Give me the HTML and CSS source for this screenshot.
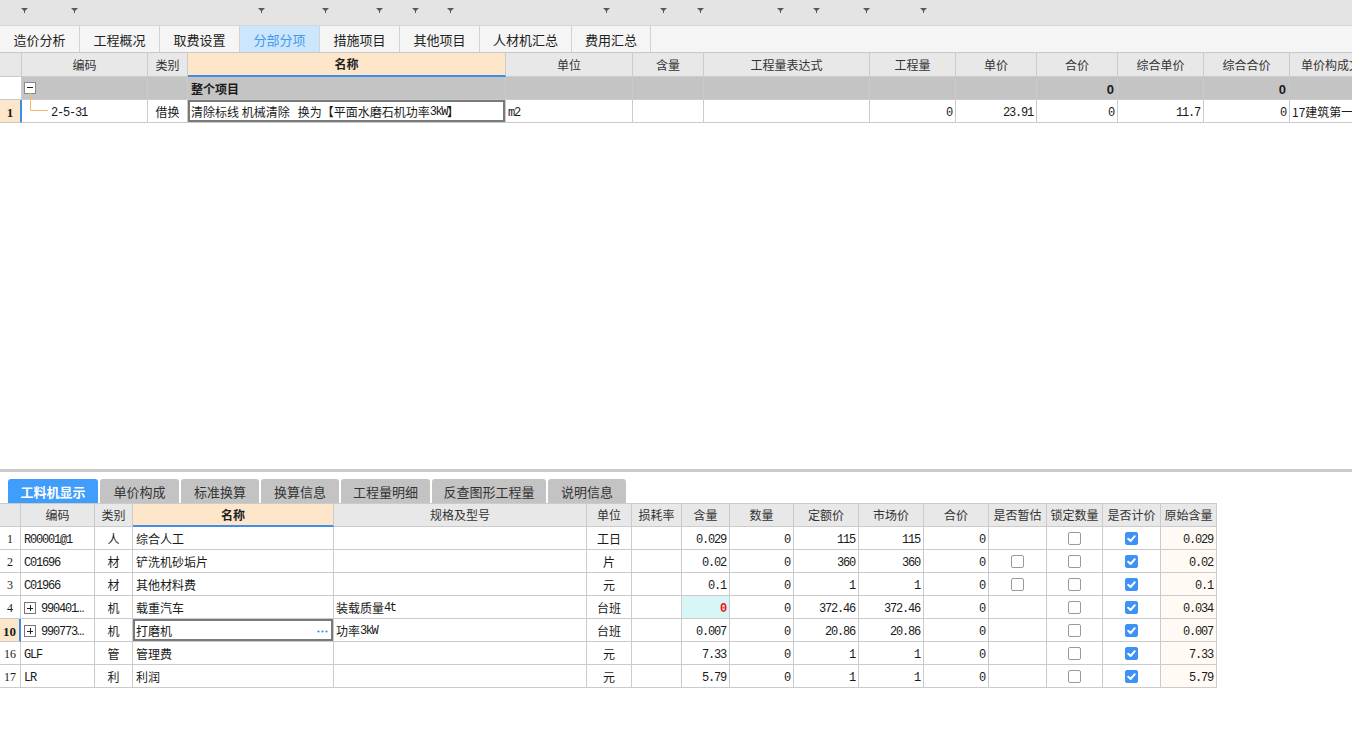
FILE: index.html
```html
<!DOCTYPE html>
<html lang="zh-CN">
<head>
<meta charset="utf-8">
<title>分部分项</title>
<link rel="stylesheet" href="styles.css">
</head>
<body>
<div class="toolbar">
  <div class="tb-item w28"><svg class="arrow" viewBox="0 0 7 5"><polygon points="0,0 7,0 3.5,3.5"/><rect x="3" y="3" width="1" height="2"/></svg></div>
  <div class="tb-item w50"><svg class="arrow" viewBox="0 0 7 5"><polygon points="0,0 7,0 3.5,3.5"/><rect x="3" y="3" width="1" height="2"/></svg></div>
  <div class="tb-item w187"><svg class="arrow" viewBox="0 0 7 5"><polygon points="0,0 7,0 3.5,3.5"/><rect x="3" y="3" width="1" height="2"/></svg></div>
  <div class="tb-item w64"><svg class="arrow" viewBox="0 0 7 5"><polygon points="0,0 7,0 3.5,3.5"/><rect x="3" y="3" width="1" height="2"/></svg></div>
  <div class="tb-item w54"><svg class="arrow" viewBox="0 0 7 5"><polygon points="0,0 7,0 3.5,3.5"/><rect x="3" y="3" width="1" height="2"/></svg></div>
  <div class="tb-item w36"><svg class="arrow" viewBox="0 0 7 5"><polygon points="0,0 7,0 3.5,3.5"/><rect x="3" y="3" width="1" height="2"/></svg></div>
  <div class="tb-item w35"><svg class="arrow" viewBox="0 0 7 5"><polygon points="0,0 7,0 3.5,3.5"/><rect x="3" y="3" width="1" height="2"/></svg></div>
  <div class="tb-item w156"><svg class="arrow" viewBox="0 0 7 5"><polygon points="0,0 7,0 3.5,3.5"/><rect x="3" y="3" width="1" height="2"/></svg></div>
  <div class="tb-item w57"><svg class="arrow" viewBox="0 0 7 5"><polygon points="0,0 7,0 3.5,3.5"/><rect x="3" y="3" width="1" height="2"/></svg></div>
  <div class="tb-item w37"><svg class="arrow" viewBox="0 0 7 5"><polygon points="0,0 7,0 3.5,3.5"/><rect x="3" y="3" width="1" height="2"/></svg></div>
  <div class="tb-item w80"><svg class="arrow" viewBox="0 0 7 5"><polygon points="0,0 7,0 3.5,3.5"/><rect x="3" y="3" width="1" height="2"/></svg></div>
  <div class="tb-item w36"><svg class="arrow" viewBox="0 0 7 5"><polygon points="0,0 7,0 3.5,3.5"/><rect x="3" y="3" width="1" height="2"/></svg></div>
  <div class="tb-item w50"><svg class="arrow" viewBox="0 0 7 5"><polygon points="0,0 7,0 3.5,3.5"/><rect x="3" y="3" width="1" height="2"/></svg></div>
  <div class="tb-item w57"><svg class="arrow" viewBox="0 0 7 5"><polygon points="0,0 7,0 3.5,3.5"/><rect x="3" y="3" width="1" height="2"/></svg></div>
</div>

<div class="tabs">
  <div class="tab">造价分析</div>
  <div class="tab">工程概况</div>
  <div class="tab">取费设置</div>
  <div class="tab active">分部分项</div>
  <div class="tab">措施项目</div>
  <div class="tab">其他项目</div>
  <div class="tab wide">人材机汇总</div>
  <div class="tab last">费用汇总</div>
</div>

<div class="upper">
  <div class="grid top-grid">
    <div class="row">
      <div class="c h"></div>
      <div class="c h">编码</div>
      <div class="c h">类别</div>
      <div class="c h name">名称</div>
      <div class="c h">单位</div>
      <div class="c h">含量</div>
      <div class="c h">工程量表达式</div>
      <div class="c h">工程量</div>
      <div class="c h">单价</div>
      <div class="c h">合价</div>
      <div class="c h">综合单价</div>
      <div class="c h">综合合价</div>
      <div class="c h">单价构成文件</div>
    </div>
    <div class="row group">
      <div class="c rn blank"></div>
      <div class="c code"><span class="minus"></span></div>
      <div class="c"></div>
      <div class="c bold">整个项目</div>
      <div class="c"></div>
      <div class="c"></div>
      <div class="c"></div>
      <div class="c"></div>
      <div class="c"></div>
      <div class="c r num bold">0</div>
      <div class="c"></div>
      <div class="c r num bold">0</div>
      <div class="c"></div>
    </div>
    <div class="row">
      <div class="c rn cur">1</div>
      <div class="c code tree num">2-5-31</div>
      <div class="c ctr">借换</div>
      <div class="c sel">清除标线&nbsp;机械清除&nbsp;&nbsp;&nbsp;换为【平面水磨石机功率<span class="num">3kW</span>】</div>
      <div class="c unit num">m2</div>
      <div class="c"></div>
      <div class="c"></div>
      <div class="c r num">0</div>
      <div class="c r num">23.91</div>
      <div class="c r num">0</div>
      <div class="c r num">11.7</div>
      <div class="c r num">0</div>
      <div class="c file">17建筑第一册</div>
    </div>
  </div>
</div>

<div class="splitter"></div>

<div class="lower">
  <div class="subtabs">
    <div class="stab active t1">工料机显示</div>
    <div class="stab t2">单价构成</div>
    <div class="stab t3">标准换算</div>
    <div class="stab t3">换算信息</div>
    <div class="stab t4">工程量明细</div>
    <div class="stab t5">反查图形工程量</div>
    <div class="stab t3">说明信息</div>
  </div>

  <div class="grid bot-grid">
    <div class="row">
      <div class="c h"></div>
      <div class="c h">编码</div>
      <div class="c h">类别</div>
      <div class="c h name">名称</div>
      <div class="c h">规格及型号</div>
      <div class="c h">单位</div>
      <div class="c h">损耗率</div>
      <div class="c h">含量</div>
      <div class="c h">数量</div>
      <div class="c h">定额价</div>
      <div class="c h">市场价</div>
      <div class="c h">合价</div>
      <div class="c h">是否暂估</div>
      <div class="c h">锁定数量</div>
      <div class="c h">是否计价</div>
      <div class="c h">原始含量</div>
    </div>

    <div class="row">
      <div class="c rn">1</div>
      <div class="c num">R00001@1</div>
      <div class="c ctr">人</div>
      <div class="c">综合人工</div>
      <div class="c"></div>
      <div class="c ctr">工日</div>
      <div class="c"></div>
      <div class="c r num">0.029</div>
      <div class="c r num">0</div>
      <div class="c r num">115</div>
      <div class="c r num">115</div>
      <div class="c r num">0</div>
      <div class="c ctr"></div>
      <div class="c ctr"><span class="cb"></span></div>
      <div class="c ctr"><span class="cb on"><svg viewBox="0 0 13 13"><polyline points="3.2,6.8 5.6,9 9.8,4.2"/></svg></span></div>
      <div class="c r num orig">0.029</div>
    </div>

    <div class="row">
      <div class="c rn">2</div>
      <div class="c num">C01696</div>
      <div class="c ctr">材</div>
      <div class="c">铲洗机砂垢片</div>
      <div class="c"></div>
      <div class="c ctr">片</div>
      <div class="c"></div>
      <div class="c r num">0.02</div>
      <div class="c r num">0</div>
      <div class="c r num">360</div>
      <div class="c r num">360</div>
      <div class="c r num">0</div>
      <div class="c ctr"><span class="cb"></span></div>
      <div class="c ctr"><span class="cb"></span></div>
      <div class="c ctr"><span class="cb on"><svg viewBox="0 0 13 13"><polyline points="3.2,6.8 5.6,9 9.8,4.2"/></svg></span></div>
      <div class="c r num orig">0.02</div>
    </div>

    <div class="row">
      <div class="c rn">3</div>
      <div class="c num">C01966</div>
      <div class="c ctr">材</div>
      <div class="c">其他材料费</div>
      <div class="c"></div>
      <div class="c ctr">元</div>
      <div class="c"></div>
      <div class="c r num">0.1</div>
      <div class="c r num">0</div>
      <div class="c r num">1</div>
      <div class="c r num">1</div>
      <div class="c r num">0</div>
      <div class="c ctr"><span class="cb"></span></div>
      <div class="c ctr"><span class="cb"></span></div>
      <div class="c ctr"><span class="cb on"><svg viewBox="0 0 13 13"><polyline points="3.2,6.8 5.6,9 9.8,4.2"/></svg></span></div>
      <div class="c r num orig">0.1</div>
    </div>

    <div class="row">
      <div class="c rn">4</div>
      <div class="c num"><span class="plus"></span>990401…</div>
      <div class="c ctr">机</div>
      <div class="c">载重汽车</div>
      <div class="c spec">装载质量<span class="num">4t</span></div>
      <div class="c ctr">台班</div>
      <div class="c"></div>
      <div class="c r num hl">0</div>
      <div class="c r num">0</div>
      <div class="c r num">372.46</div>
      <div class="c r num">372.46</div>
      <div class="c r num">0</div>
      <div class="c ctr"></div>
      <div class="c ctr"><span class="cb"></span></div>
      <div class="c ctr"><span class="cb on"><svg viewBox="0 0 13 13"><polyline points="3.2,6.8 5.6,9 9.8,4.2"/></svg></span></div>
      <div class="c r num orig">0.034</div>
    </div>

    <div class="row">
      <div class="c rn cur">10</div>
      <div class="c num"><span class="plus"></span>990773…</div>
      <div class="c ctr">机</div>
      <div class="c sel between">打磨机<svg class="dots" viewBox="0 0 11 3"><circle cx="1.5" cy="1.5" r="1.1"/><circle cx="5.5" cy="1.5" r="1.1"/><circle cx="9.5" cy="1.5" r="1.1"/></svg></div>
      <div class="c spec">功率<span class="num">3kW</span></div>
      <div class="c ctr">台班</div>
      <div class="c"></div>
      <div class="c r num">0.007</div>
      <div class="c r num">0</div>
      <div class="c r num">20.86</div>
      <div class="c r num">20.86</div>
      <div class="c r num">0</div>
      <div class="c ctr"></div>
      <div class="c ctr"><span class="cb"></span></div>
      <div class="c ctr"><span class="cb on"><svg viewBox="0 0 13 13"><polyline points="3.2,6.8 5.6,9 9.8,4.2"/></svg></span></div>
      <div class="c r num orig">0.007</div>
    </div>

    <div class="row">
      <div class="c rn">16</div>
      <div class="c num">GLF</div>
      <div class="c ctr">管</div>
      <div class="c">管理费</div>
      <div class="c"></div>
      <div class="c ctr">元</div>
      <div class="c"></div>
      <div class="c r num">7.33</div>
      <div class="c r num">0</div>
      <div class="c r num">1</div>
      <div class="c r num">1</div>
      <div class="c r num">0</div>
      <div class="c ctr"></div>
      <div class="c ctr"><span class="cb"></span></div>
      <div class="c ctr"><span class="cb on"><svg viewBox="0 0 13 13"><polyline points="3.2,6.8 5.6,9 9.8,4.2"/></svg></span></div>
      <div class="c r num orig">7.33</div>
    </div>

    <div class="row">
      <div class="c rn">17</div>
      <div class="c num">LR</div>
      <div class="c ctr">利</div>
      <div class="c">利润</div>
      <div class="c"></div>
      <div class="c ctr">元</div>
      <div class="c"></div>
      <div class="c r num">5.79</div>
      <div class="c r num">0</div>
      <div class="c r num">1</div>
      <div class="c r num">1</div>
      <div class="c r num">0</div>
      <div class="c ctr"></div>
      <div class="c ctr"><span class="cb"></span></div>
      <div class="c ctr"><span class="cb on"><svg viewBox="0 0 13 13"><polyline points="3.2,6.8 5.6,9 9.8,4.2"/></svg></span></div>
      <div class="c r num orig">5.79</div>
    </div>
  </div>
</div>
</body>
</html>
```

FILE: styles.css
```css
* { box-sizing: border-box; }

html, body {
  margin: 0;
  padding: 0;
}

body {
  width: 1352px;
  height: 732px;
  overflow: hidden;
  background: #ffffff;
  color: #222222;
  font-family: "Noto Sans CJK SC", "Noto Sans", sans-serif;
  font-size: 12px;
  line-height: 1;
}

/* ---------- toolbar ---------- */
.toolbar {
  height: 26px;
  background: #e4e4e4;
  border-bottom: 1px solid #d6d6d6;
  display: flex;
}
.tb-item {
  display: flex;
  justify-content: flex-end;
  align-items: flex-start;
  padding-top: 8px;
  flex: none;
}
.arrow { width: 7px; height: 5px; fill: #585858; display: block; }
.w28 { width: 28px; } .w50 { width: 50px; } .w187 { width: 187px; }
.w64 { width: 64px; } .w54 { width: 54px; } .w36 { width: 36px; }
.w35 { width: 35px; } .w156 { width: 156px; } .w57 { width: 57px; }
.w37 { width: 37px; } .w80 { width: 80px; }

/* ---------- main tabs ---------- */
.tabs {
  height: 27px;
  background: #f5f5f5;
  border-bottom: 1px solid #c9c9c9;
  display: flex;
}
.tab {
  width: 80px;
  flex: none;
  border-right: 1px solid #d3d3d3;
  display: flex;
  align-items: center;
  justify-content: center;
  font-size: 13px;
  color: #222;
}
.tab.wide { width: 92px; }
.tab.last { width: 79px; }
.tab.active { background: #cce7fd; color: #4598ec; }

/* ---------- grids ---------- */
.upper { height: 416px; overflow: hidden; }

.grid { display: grid; }
.row { display: contents; }

.top-grid {
  width: 1385px;
  grid-template-columns: 22px 126px 40px 318px 127px 71px 166px 86px 81px 81px 86px 86px 95px;
}
.bot-grid {
  width: 1217px;
  border-top: 1px solid #cbcbcb;
  grid-template-columns: 21px 74px 38px 201px 253px 45px 50px 48px 64px 65px 65px 65px 58px 56px 58px 56px;
}

.c {
  height: 23px;
  border-right: 1px solid #cbcbcb;
  border-bottom: 1px solid #cbcbcb;
  display: flex;
  align-items: center;
  padding: 2px 2px 0 3px;
  white-space: nowrap;
  overflow: hidden;
  color: #1a1a1a;
}
.h {
  background: #e8e8e8;
  justify-content: center;
  color: #333;
  padding: 0;
}
.top-grid .h { height: 24px; }
.h.name {
  background: #fde6c9;
  font-weight: bold;
  color: #222;
  border-bottom: 2px solid #3f8fe6;
}

.r { justify-content: flex-end; padding-right: 3px; }
.ctr { justify-content: center; padding-left: 0; padding-right: 0; }
.bold { font-weight: bold; }
.num {
  font-family: "Liberation Mono", "DejaVu Sans Mono", monospace;
  letter-spacing: -1.2px;
}
.c.num { padding-top: 4px; }
.num.bold { font-family: "Liberation Sans", sans-serif; letter-spacing: 0; font-size: 13px; }
.c.num.bold { padding-top: 2px; }

.rn {
  justify-content: center;
  padding-left: 0;
  padding-right: 0;
  font-family: "Liberation Serif", serif;
  font-size: 12px;
}
.rn.cur {
  background: #fde6c9;
  font-weight: bold;
  font-size: 13px;
  border-right: 2px solid #3d8ee9;
}

/* group row */
.group .c { background: #c4c4c4; }
.group .rn.blank { background: #ffffff; }

.code { position: relative; }
.group .code { padding-top: 0; }
.minus {
  width: 12px;
  height: 12px;
  border: 1px solid #8a8a8a;
  background: #ffffff;
  position: relative;
  margin-left: -1px;
}
.minus::after {
  content: "";
  position: absolute;
  left: 2px;
  right: 2px;
  top: 4px;
  height: 1px;
  background: #222;
}

.tree { padding-left: 29px; overflow: visible; }
.tree::before {
  content: "";
  position: absolute;
  left: 8px;
  top: -7px;
  width: 17px;
  height: 17px;
  border-left: 1px solid #f6bb62;
  border-bottom: 1px solid #f6bb62;
}

.sel { box-shadow: inset 0 0 0 2px #7a7a7a; }
.sel .num { letter-spacing: -1.5px; }
.unit { padding-left: 2px; }
.file { padding-left: 2px; }

.between { justify-content: space-between; padding-right: 5px; }
.dots { width: 11px; height: 3px; fill: #3b8be0; display: block; }

.spec { padding-left: 2px; }
.spec .num { letter-spacing: -1.5px; }

.plus {
  width: 12px;
  height: 12px;
  border: 1px solid #777;
  position: relative;
  margin-right: 5px;
  margin-top: -2px;
  flex: none;
}
.plus::before, .plus::after {
  content: "";
  position: absolute;
  background: #222;
}
.plus::before { left: 2px; right: 2px; top: 5px; height: 1px; }
.plus::after { top: 2px; bottom: 2px; left: 5px; width: 1px; }

.hl { background: #d8f6f6; color: #ee1111; font-weight: bold; }
.orig { background: #fffaf4; }

/* checkboxes */
.c.ctr:has(.cb) { padding-top: 0; }
.cb {
  width: 13px;
  height: 13px;
  border: 1px solid #9a9a9a;
  border-radius: 2px;
  background: #ffffff;
  display: block;
}
.cb.on {
  background: #3f92f5;
  border-color: #3f92f5;
  position: relative;
}
.cb svg {
  position: absolute;
  left: -1px;
  top: -1px;
  width: 13px;
  height: 13px;
}
.cb polyline {
  fill: none;
  stroke: #ffffff;
  stroke-width: 2;
  stroke-linecap: round;
  stroke-linejoin: round;
}

/* ---------- splitter & lower ---------- */
.splitter { height: 3px; background: #cacaca; }

.lower { padding-top: 7px; }

.subtabs {
  height: 24px;
  display: flex;
  gap: 2px;
  padding-left: 8px;
}
.stab {
  flex: none;
  background: #c3c3c3;
  border-radius: 3px 3px 0 0;
  display: flex;
  align-items: center;
  justify-content: center;
  font-size: 13px;
  color: #333;
}
.stab.active { background: #409dfb; color: #ffffff; font-weight: bold; }
.t1 { width: 90px; }
.t2 { width: 79px; }
.t3 { width: 78px; }
.t4 { width: 89px; }
.t5 { width: 114px; }
```
